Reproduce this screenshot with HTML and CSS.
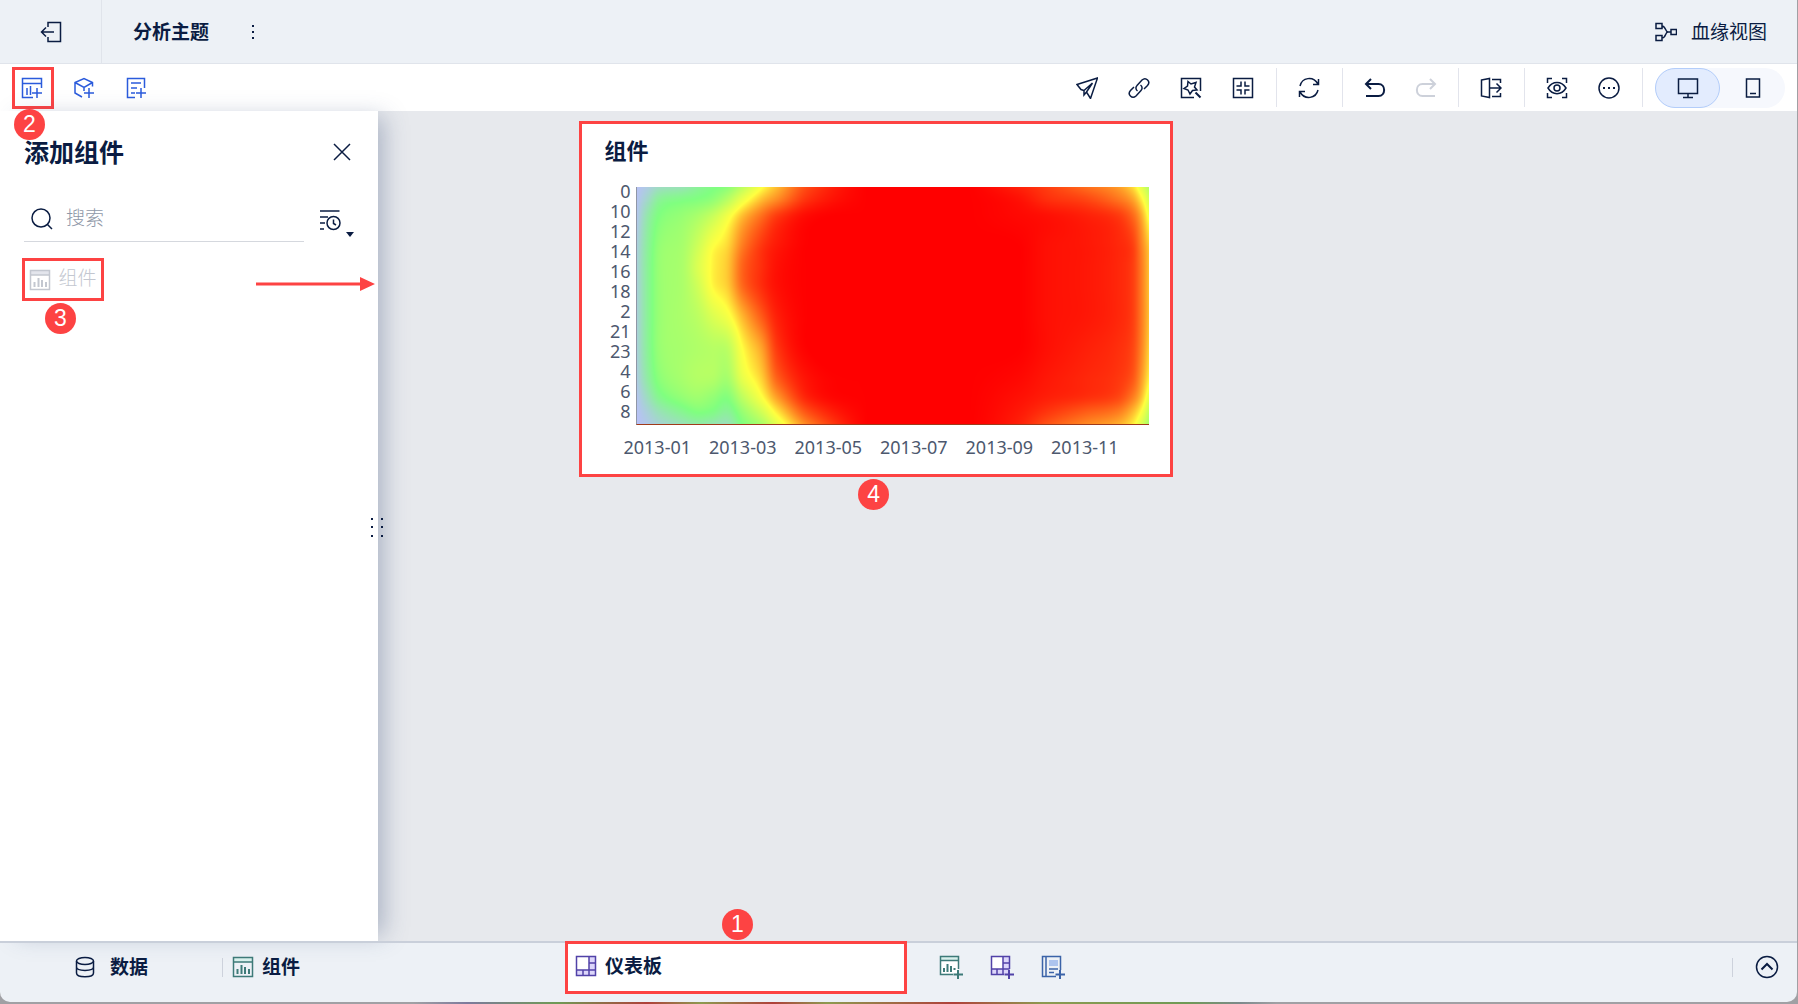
FILE: index.html
```html
<!DOCTYPE html>
<html lang="zh-CN">
<head>
    <meta charset="UTF-8">
    <meta name="viewport" content="width=device-width, initial-scale=1.0">
    <title>分析主题</title>
    <link rel="stylesheet" href="styles.css">
</head>
<body>
<div class="app">

    <header class="header">
        <button class="exit" aria-label="退出">
            <svg class="icon" viewBox="0 0 22 22"><path d="M8 6V1.500H20.500V20.500H8V16M1.500 11H14M6 6.500L1.500 11L6 15.500"/></svg>
        </button>
        <h1 class="subject">分析主题</h1>
        <button class="dots" aria-label="更多">
            <svg class="icon solid" viewBox="0 0 22 22"><path d="M10 4h2v2h-2zM10 10h2v2h-2zM10 16h2v2h-2z"/></svg>
        </button>
        <a class="lineage" href="#">
            <svg class="icon" viewBox="0 0 22 22"><path d="M1 2.500H7V7.500H1ZM1 14.500H7V19.500H1ZM16 8.500H21.500V13.500H16ZM7 5C11 5 10 11 13 11C10 11 11 17 7 17M12 11H16"/></svg>
            <span>血缘视图</span>
        </a>
    </header>

    <div class="toolbar">
        <div class="tools">
            <button class="tool blue" aria-label="添加组件">
                <svg class="icon" viewBox="0 0 22 22"><path d="M12 20.500H1.500V1.500H20.500V11M1.500 6.500H20.500M6 18V11M9.500 18V9M16 11V21M11 16H21"/></svg>
                <span class="mark"></span><span class="badge below-left">2</span>
            </button>
            <button class="tool blue" aria-label="添加其他组件">
                <svg class="icon" viewBox="0 0 22 22"><path d="M9 20L2 16V5.500L11 1.500L19.500 5.500V9.500M2 5.500L11 10.500L19.500 5.500M11 10.500V14M16 11V21M11 16H21"/></svg>
            </button>
            <button class="tool blue" aria-label="添加过滤组件">
                <svg class="icon" viewBox="0 0 22 22"><path d="M10 20.500H2.500V1.500H19.500V11M6 6H16M6 11H12M6 16H10M16 11V21M11 16H21"/></svg>
            </button>
        </div>
        <div class="tools">
            <button class="tool" aria-label="发布">
                <svg class="icon" viewBox="0 0 22 22"><path d="M1 7.500L21.500 1L14.500 21.500L10.500 15L8 18V13.500L5 12.500ZM8 13.500L16.500 6M10.500 15L16.500 6"/></svg>
            </button>
            <button class="tool" aria-label="链接">
                <svg class="icon" viewBox="0 0 22 22"><path d="M9.500 14C7.500 12.500 7.500 10 9 8.500L14 3C18 -.500 23 4.500 19.500 8.500L16 12M12.500 8C14.500 9.500 14.500 12 13 13.500L8 19C4 22.500 -1 17.500 2.500 13.500L6 10"/></svg>
            </button>
            <button class="tool" aria-label="样式">
                <svg class="icon" viewBox="0 0 22 22"><path d="M14 20.500H1.500V1.500H20.500V14M8 4.500L11 7L16 5.500L14.500 10L17 13L12.500 13.500L10 17L8 13L4 11.500L7.500 9Z"/><path class="bold" d="M15.500 15.500L20.500 20.500"/></svg>
            </button>
            <button class="tool" aria-label="缩放">
                <svg class="icon" viewBox="0 0 22 22"><path d="M1.500 1.500H20.500V20.500H1.500ZM9 4.500V9H4.500M13 4.500V9H17.500M9 17.500V13H4.500M13 17.500V13H17.500"/></svg>
            </button>
            <span class="divider"></span>
            <button class="tool" aria-label="刷新">
                <svg class="icon" viewBox="0 0 22 22"><path d="M2 9C4 .500 15 -1.500 20 7M20.500 2V7.500H15M20 13C18 21.500 7 23.500 2 15M1.500 20V14.500H7"/></svg>
            </button>
            <span class="divider"></span>
            <button class="tool history" aria-label="撤销">
                <svg class="icon bold" viewBox="0 0 22 22"><path d="M7 2L2 7L7 12M2 7H14.500C22 7 22 19 14.500 19H2"/></svg>
            </button>
            <button class="tool history" aria-label="重做" disabled>
                <svg class="icon bold" viewBox="0 0 22 22"><path d="M15 2L20 7L15 12M20 7H7.500C0 7 0 19 7.500 19H20"/></svg>
            </button>
            <span class="divider"></span>
            <button class="tool" aria-label="导出">
                <svg class="icon" viewBox="0 0 22 22"><path d="M1.500 3L9.500 1.500V20.500L1.500 19ZM12 2.500H20.500V6M12 19.500H20.500V16M10 11H21M16.500 6.500L21 11L16.500 15.500"/></svg>
            </button>
            <span class="divider"></span>
            <button class="tool" aria-label="预览">
                <svg class="icon" viewBox="0 0 22 22"><path d="M1.500 6V1.500H6M16 1.500H20.500V6M20.500 16V20.500H16M6 20.500H1.500V16M2 11C6.500 3.500 15.500 3.500 20 11C15.500 18.500 6.500 18.500 2 11Z"/><circle cx="11" cy="11" r="3"/></svg>
            </button>
            <button class="tool" aria-label="更多操作">
                <svg class="icon" viewBox="0 0 22 22"><circle cx="11" cy="11" r="10"/><path class="fill" d="M5 10h2v2H5zM10 10h2v2h-2zM15 10h2v2h-2z"/></svg>
            </button>
            <span class="divider"></span>
            <div class="devices">
                <button class="device active" aria-label="电脑">
                    <svg class="icon" viewBox="0 0 22 22"><path d="M1.500 2H20.500V16.500H1.500ZM11 16.500V20M6 20.500H16"/></svg>
                </button>
                <button class="device" aria-label="手机">
                    <svg class="icon" viewBox="0 0 22 22"><path d="M4.500 2H17.500V20H4.500ZM8 16.500H14"/></svg>
                </button>
            </div>
        </div>
    </div>

    <main class="main">
        <aside class="panel">
            <div class="panel-head">
                <h2>添加组件</h2>
                <button class="close" aria-label="关闭">
                    <svg class="icon" viewBox="0 0 22 22"><path d="M3 3L19 19M19 3L3 19"/></svg>
                </button>
            </div>
            <div class="search-row">
                <label class="search">
                    <svg class="icon big" viewBox="0 0 24 24"><circle cx="11" cy="12" r="9"/><path d="M17.500 18.500L22 23"/></svg>
                    <input type="text" placeholder="搜索" aria-label="搜索">
                </label>
                <button class="sort" aria-label="排序">
                    <svg class="icon" viewBox="0 0 22 22"><path d="M1 2H20.500M1 8H9M1 14H6M1 20H5"/><circle cx="14.500" cy="14" r="6.500"/><path d="M14.500 10.500V14.500L17 16"/></svg>
                    <svg class="caret" viewBox="0 0 8 5"><path d="M0 0H8L4 5Z"/></svg>
                </button>
            </div>
            <div class="item-row">
                <button class="item">
                    <svg class="icon" viewBox="0 0 22 22"><path class="band" d="M1.500 1.500H20.500V6H1.500Z"/><path d="M1.500 1.500H20.500V20.500H1.500ZM1.500 6H20.500"/><path class="bars" d="M5.500 18V13M9.500 18V9M13 18V11M17 18V13"/></svg>
                    <span>组件</span>
                    <span class="badge below">3</span>
                </button>
                <svg class="arrow" viewBox="0 0 120 16"><path d="M0 6.500H105V9.500H0ZM104 1L119 8L104 15Z"/></svg>
            </div>
            <svg class="grip" viewBox="0 0 12 20"><path d="M0 0h2v2H0zM10 0h2v2h-2zM0 8h2v2H0zM10 8h2v2h-2zM0 17h2v2H0zM10 17h2v2h-2z"/></svg>
        </aside>

        <section class="board">
            <article class="widget">
                <h3>组件</h3>
                <div class="chart">
                    <div class="y-axis">
                        <span>0</span><span>10</span><span>12</span><span>14</span><span>16</span><span>18</span>
                        <span>2</span><span>21</span><span>23</span><span>4</span><span>6</span><span>8</span>
                    </div>
                    <canvas id="heat" class="heat" width="512" height="238"></canvas>
                    <div class="x-axis">
                        <span>2013-01</span><span>2013-03</span><span>2013-05</span><span>2013-07</span><span>2013-09</span><span>2013-11</span>
                    </div>
                </div>
                <span class="badge below">4</span>
            </article>
        </section>
    </main>

    <footer class="footer">
        <a class="tab data" href="#">
            <svg class="icon" viewBox="0 0 22 22"><ellipse cx="11" cy="5" rx="8.500" ry="3.500"/><path d="M2.500 5V17C2.500 22 19.500 22 19.500 17V5M2.500 11C2.500 15.500 19.500 15.500 19.500 11"/></svg>
            <span>数据</span>
        </a>
        <span class="divider short"></span>
        <a class="tab component" href="#">
            <svg class="icon green" viewBox="0 0 22 22"><path class="band" d="M1.500 1.500H20.500V6H1.500Z"/><path d="M1.500 1.500H20.500V20.500H1.500ZM1.500 6H20.500"/><path class="bars" d="M5.500 18V13M9.500 18V9M13 18V11M17 18V13"/></svg>
            <span>组件</span>
        </a>
        <a class="tab dashboard" href="#">
            <svg class="icon purple" viewBox="0 0 22 22"><path class="band" d="M14 1.500H20.500V20.500H1.500V15H14Z"/><path class="paper" d="M1.500 1.500H14V15H1.500Z"/><path d="M1.500 1.500H20.500V20.500H1.500ZM14 1.500V15M1.500 15H20.500M14 8H20.500M8 15V20.500M14 15V20.500"/></svg>
            <span>仪表板</span>
            <span class="badge above">1</span>
        </a>
        <div class="adders">
            <button aria-label="新建组件">
                <svg class="icon large green" viewBox="0 0 24 24"><path class="paper" d="M1.500 5H19.500V18.500H1.500Z"/><path class="band" d="M1.500 1.500H19.500V5H1.500Z"/><path d="M14 19.500H1.500V1.500H19.500V14M1.500 5.500H19.500"/><path class="bars" d="M5 17V13M8.500 17V9M12 17V11M15.500 15V13"/><path class="bold" d="M19 15V24M14.500 19.500H24"/></svg>
            </button>
            <button aria-label="新建仪表板">
                <svg class="icon large purple" viewBox="0 0 24 24"><path class="band" d="M13 1.500H19.500V19.500H1.500V14H13Z"/><path class="paper" d="M1.500 1.500H13V14H1.500Z"/><path d="M14 19.500H1.500V1.500H19.500V14M13 1.500V14M1.500 14H19.500M13 8H19.500M7 14V19.500M13 14V19.500"/><path class="bold" d="M19 15V24M14.500 19.500H24"/></svg>
            </button>
            <button aria-label="新建报告">
                <svg class="icon large navy" viewBox="0 0 24 24"><path class="band" d="M8 5H17V11H8Z"/><path d="M15 21.500H1.500V1.500H19.500V15M5 1.500V21.500M8 14H17M8 17.500H13"/><path class="bold" d="M19 15V24M14.500 19.500H24"/></svg>
            </button>
        </div>
        <span class="divider short"></span>
        <button class="expand" aria-label="展开">
            <svg class="icon big" viewBox="0 0 24 24"><circle cx="12" cy="12" r="10.500"/><path class="bold" d="M6.500 14.500L12 9L17.500 14.500"/></svg>
        </button>
    </footer>
</div>
<script src="heat.js"></script>
</body>
</html>
```
FILE: styles.css
```css
* {
    box-sizing: border-box;
}

body {
    margin: 0;
    padding: 0 1px 2px 0;
    height: 100vh;
    overflow: hidden;
    color: #0a1c42;
    font-family: "Noto Sans", "Noto Sans CJK SC", sans-serif;
    font-size: 19px;
    line-height: 28px;
    background: linear-gradient(90deg, #a0a0a4 23%, #7d7a9c 26%, #6f9a55 31%, #b0403a 36%, #8d9a50 39%, #b0403a 43%, #8d9a50 46%, #b0403a 53%, #8d9a50 58%, #6f9a55 66%, #7d8a8c 69%, #a0a0a4 71%);
}

h1, h2, h3 {
    margin: 0;
    font-weight: 700;
}

button, input {
    padding: 0;
    border: 0;
    background: none;
    color: inherit;
    font: inherit;
}

button {
    display: flex;
    align-items: center;
    justify-content: center;
}

a {
    color: inherit;
    text-decoration: none;
}

.app {
    display: flex;
    flex-direction: column;
    height: 100%;
    overflow: hidden;
    background: #edf1f6;
    border-radius: 0 0 10px 10px;
}

/* icons */
.icon {
    flex: none;
    width: 22px;
    height: 22px;
    fill: none;
    stroke: currentColor;
    stroke-width: 1.5;
}

.icon.big, .icon.large {
    width: 24px;
    height: 24px;
}

.icon.bold, .icon .bold {
    stroke-width: 2;
}

.icon.solid, .icon .fill, .grip, .caret {
    fill: currentColor;
    stroke: none;
}

.icon .bars {
    stroke-width: 2;
}

.icon .band {
    fill: #e3e5ec;
    stroke: none;
}

.icon .paper {
    fill: #fff;
    stroke: none;
}

.green {
    color: #3d7a78;
}

.green .band {
    fill: #d8f0ec;
}

.purple {
    color: #5142a8;
}

.purple .band {
    fill: #dcd6fa;
}

.navy {
    color: #3b63a8;
}

.navy .band {
    fill: #adc4ee;
}

/* header */
.header {
    display: flex;
    align-items: center;
    height: 64px;
    border-bottom: 1px solid #e0e4eb;
}

.exit {
    align-self: stretch;
    width: 102px;
    border-right: 1px solid #e0e4eb;
}

.subject {
    margin-left: 31px;
    font-size: 19px;
}

.dots {
    margin-left: 33px;
}

.lineage {
    display: flex;
    align-items: center;
    gap: 14px;
    margin-left: auto;
    padding-right: 30px;
}

/* toolbar */
.toolbar {
    display: flex;
    justify-content: space-between;
    align-items: center;
    height: 47px;
    padding: 0 12px 0 6px;
    background: #fff;
}

.tools {
    display: flex;
    align-items: center;
}

.tool {
    position: relative;
    width: 52px;
    height: 40px;
}

.tool.history {
    width: 51px;
}

.tool:disabled {
    color: #cdd1da;
}

.blue {
    color: #2b5bdc;
}

.divider {
    width: 1px;
    height: 39px;
    margin: 0 6px 0 7px;
    background: #e2e4ec;
}

.divider.short {
    height: 19px;
    margin: 0;
    background: #cdd2dc;
}

.devices {
    display: flex;
    margin-left: 6px;
    background: #f6f8fd;
    border-radius: 20px;
}

.device {
    width: 65px;
    height: 40px;
    border: 1px solid transparent;
    border-radius: 20px;
}

.device.active {
    background: #e3ecfe;
    border-color: #b3cdfa;
}

/* step marks */
.mark {
    position: absolute;
    inset: -1px 4px -1px 6px;
    border: 3px solid #fd4343;
}

.badge {
    position: absolute;
    z-index: 3;
    width: 31px;
    height: 31px;
    border-radius: 50%;
    background: #fd4343;
    color: #fff;
    font-family: "Liberation Sans", sans-serif;
    font-size: 23px;
    font-weight: 400;
    line-height: 31px;
    text-align: center;
}

.badge.below-left {
    top: 41px;
    left: 8px;
}

.badge.below {
    top: 100%;
    left: 50%;
    margin: 5px 0 0 -18px;
}

.badge.above {
    bottom: 100%;
    left: 50%;
    margin: 0 0 4px -14px;
}

/* side panel */
.main {
    display: flex;
    flex: 1;
    min-height: 0;
    background: #e7e9ed;
}

.panel {
    position: relative;
    width: 378px;
    padding: 24px 24px 0;
    background: #fff;
    box-shadow: 12px 0 22px -6px rgba(60, 80, 120, 0.34);
}

.panel-head {
    display: flex;
    align-items: center;
    justify-content: space-between;
}

.panel-head h2 {
    font-size: 25px;
    line-height: 34px;
}

.close {
    width: 24px;
    height: 24px;
}

.search-row {
    display: flex;
    justify-content: space-between;
    margin-top: 26px;
}

.search {
    display: flex;
    align-items: center;
    gap: 12px;
    width: 280px;
    height: 47px;
    padding-left: 6px;
    border-bottom: 1px solid #d5d8de;
}

.search input {
    flex: 1;
    min-width: 0;
    height: 28px;
    outline: none;
}

.search input::placeholder {
    color: #8f98a8;
    font-weight: 300;
    opacity: 1;
}

.sort {
    gap: 5px;
    height: 49px;
}

.caret {
    align-self: flex-end;
    width: 8px;
    height: 5px;
    margin-bottom: 7px;
}

.item-row {
    display: flex;
    align-items: center;
    justify-content: space-between;
    margin: 14px -22px 0 -2px;
}

.item {
    position: relative;
    gap: 7px;
    width: 82px;
    height: 43px;
    border: 3px solid #fd4343;
    color: #c3c7d0;
    font-weight: 300;
}

.item > span:not(.badge) {
    padding-bottom: 3px;
}

.arrow {
    width: 120px;
    height: 16px;
    margin-top: 8px;
    fill: #fd4343;
}

.grip {
    position: absolute;
    z-index: 2;
    top: 50%;
    right: -5px;
    width: 12px;
    height: 20px;
    margin-top: -8px;
}

/* dashboard */
.board {
    flex: 1;
    min-width: 0;
    padding-top: 10px;
}

.widget {
    position: relative;
    width: 41.8%;
    margin-left: 14.2%;
    padding: 10px 21px 12px 22px;
    border: 3px solid #fd4343;
    background: #fff;
}

.widget h3 {
    font-size: 22px;
    line-height: 32px;
}

.chart {
    display: grid;
    grid-template-columns: 26px 1fr;
    column-gap: 6px;
    margin-top: 21px;
    color: #4d586e;
    font-size: 18px;
}

.y-axis {
    display: grid;
    grid-template-rows: repeat(12, 1fr);
    height: 238px;
    margin-top: -6px;
    line-height: 20px;
    text-align: right;
}

.heat {
    display: block;
    width: 100%;
    height: 238px;
    border-left: 1px solid #8f97a6;
    border-bottom: 1px solid #a03a1a;
}

.x-axis {
    display: grid;
    grid-column: 2;
    grid-template-columns: repeat(6, 1fr);
    margin: 7px 21px 0 -22px;
    line-height: 30px;
    text-align: center;
    white-space: nowrap;
}

/* bottom tabs */
.footer {
    position: relative;
    display: flex;
    align-items: center;
    height: 61px;
    padding: 0 18px 11px 0;
    border-top: 2px solid #c9cfda;
    font-weight: 700;
}

.tab {
    display: flex;
    align-items: center;
    gap: 8px;
}

.data {
    gap: 14px;
    width: 222px;
    padding-left: 74px;
}

.component {
    width: 342px;
    padding-left: 9px;
}

.dashboard {
    position: relative;
    align-self: flex-start;
    width: 342px;
    height: 53px;
    margin-top: -2px;
    padding: 0 7px 3px;
    border: 3px solid #fd4343;
    background: #fff;
}

.adders {
    display: flex;
    gap: 27px;
    margin: 0 auto 0 32px;
}

.expand {
    margin-left: 22px;
}
```
FILE: heat.js
```js
// heat values, 0 = violet, .33 = green, .66 = yellow, 1 = red
const xs = [0, 10, 22, 45, 60, 75, 90, 105, 124, 140, 171, 230, 330, 380, 410, 448, 480, 495, 504, 512];
const ys = [0, 12, 30, 60, 80, 100, 130, 160, 190, 210, 225, 238];
const values = [
    [.03, .08, .16, .20, .27, .32, .37, .50, .66, .76, .91, 1, 1, .96, .92, .86, .80, .72, .60, .46],
    [.04, .14, .27, .32, .34, .38, .48, .62, .75, .82, .94, 1, 1, .98, .94, .91, .85, .79, .69, .55],
    [.06, .22, .34, .40, .45, .53, .64, .76, .86, .93, .99, 1, 1, .99, .98, .96, .93, .87, .78, .64],
    [.10, .26, .39, .44, .54, .66, .72, .84, .93, .97, 1, 1, 1, 1, .98, .97, .95, .92, .83, .73],
    [.11, .27, .40, .45, .57, .68, .74, .87, .94, .98, 1, 1, 1, 1, .98, .97, .95, .92, .84, .74],
    [.11, .27, .40, .45, .54, .67, .73, .86, .94, .98, 1, 1, 1, 1, .98, .97, .95, .92, .84, .74],
    [.11, .27, .40, .45, .49, .57, .64, .76, .88, .96, 1, 1, 1, 1, .98, .97, .95, .92, .84, .74],
    [.11, .27, .40, .44, .46, .48, .50, .67, .79, .93, 1, 1, 1, 1, .98, .96, .94, .91, .83, .72],
    [.09, .24, .37, .44, .47, .47, .44, .61, .73, .88, .98, 1, 1, .99, .97, .95, .93, .89, .80, .68],
    [.05, .17, .30, .39, .42, .39, .35, .50, .66, .80, .96, 1, 1, .98, .96, .94, .91, .84, .75, .60],
    [.03, .10, .19, .29, .34, .32, .27, .40, .55, .70, .90, 1, 1, .97, .93, .88, .84, .76, .66, .50],
    [.02, .06, .11, .18, .22, .20, .18, .33, .44, .60, .83, 1, 1, .96, .89, .82, .77, .69, .57, .42]
];
const stops = [[188, 188, 255], [128, 255, 128], [255, 255, 64], [255, 0, 0]];

function slope(p, v, i) {
    const a = Math.max(0, i - 1);
    const b = Math.min(p.length - 1, i + 1);
    return (v[b] - v[a]) / (p[b] - p[a]);
}

function sample(p, v, x) {
    let i = 0;
    while (i < p.length - 2 && x > p[i + 1]) i++;
    const h = p[i + 1] - p[i];
    const t = (x - p[i]) / h;
    const t2 = t * t;
    const t3 = t2 * t;
    return (2 * t3 - 3 * t2 + 1) * v[i] + (t3 - 2 * t2 + t) * h * slope(p, v, i)
        + (3 * t2 - 2 * t3) * v[i + 1] + (t3 - t2) * h * slope(p, v, i + 1);
}

const canvas = document.getElementById('heat');
const ctx = canvas.getContext('2d');
const image = ctx.createImageData(canvas.width, canvas.height);

for (let x = 0; x < canvas.width; x++) {
    const column = values.map(row => sample(xs, row, x));
    for (let y = 0; y < canvas.height; y++) {
        const v = Math.max(0, Math.min(1, sample(ys, column, y))) * 3;
        const n = Math.min(2, Math.floor(v));
        const at = (y * canvas.width + x) * 4;
        for (let c = 0; c < 3; c++) {
            image.data[at + c] = stops[n][c] + (stops[n + 1][c] - stops[n][c]) * (v - n);
        }
        image.data[at + 3] = 255;
    }
}
ctx.putImageData(image, 0, 0);
```
